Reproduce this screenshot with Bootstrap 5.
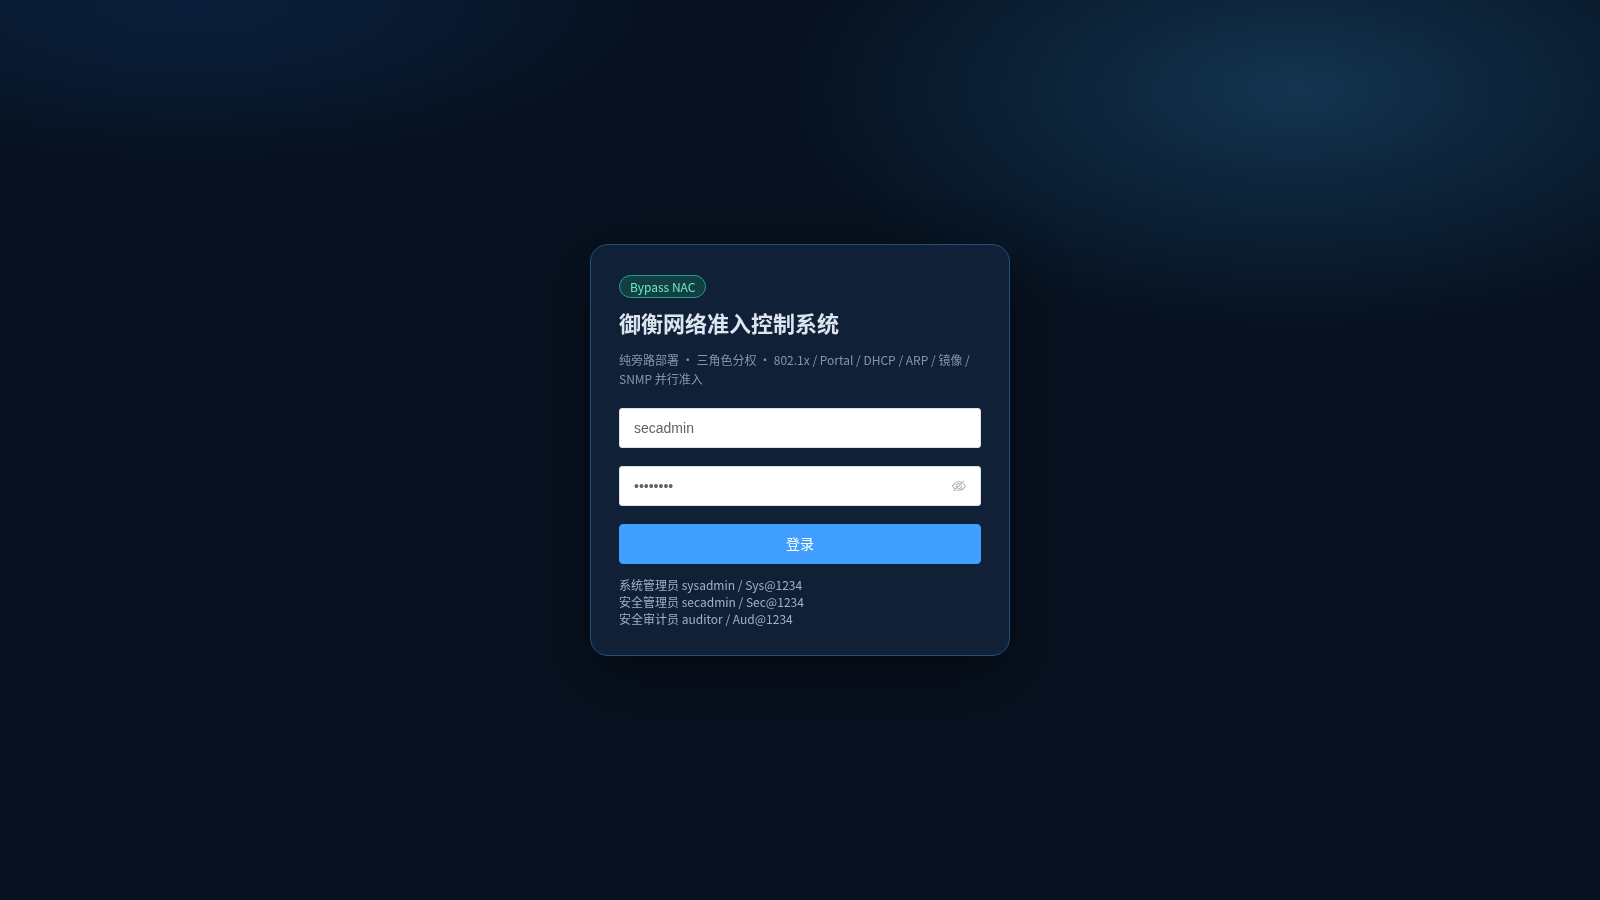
<!DOCTYPE html>
<html lang="zh-CN">
<head>
<meta charset="utf-8">
<title>御衡网络准入控制系统</title>
<link href="https://cdn.jsdelivr.net/npm/bootstrap@5.3.0/dist/css/bootstrap.min.css" rel="stylesheet">
<style>
html,body{height:100%}
body{font-family:"Noto Sans CJK SC","Noto Sans",sans-serif;color:#dbe7f3;
background:
 radial-gradient(ellipse 520px 245px at 81% 10%,rgba(29,82,122,.54) 0,rgba(22,68,104,.33) 50%,rgba(7,17,31,0) 100%),
 radial-gradient(ellipse 480px 170px at 12% 0,rgba(13,46,88,.48) 0,rgba(13,46,88,.34) 40%,rgba(7,17,31,0) 100%),
 #07111f;}
.login-panel{width:420px;background:rgba(16,34,56,.98);border:1px solid #24507a;border-radius:18px;padding:28px;box-shadow:0 20px 60px rgba(0,0,0,.45);backdrop-filter:blur(8px)}
.tag-pill{display:inline-block;height:23px;line-height:21px;padding:0 10px;font-size:12px;color:#72e8ca;background:#123f42;border:1px solid #2a9d8a;border-radius:12px}
.panel-title{font-size:22px;font-weight:700;line-height:30px;color:#dde6f0;margin:9px 0 0}
.panel-desc{font-size:12px;line-height:19px;color:#8196ae;margin:13px 0 20px}
.field-input{height:40px;font-family:"Liberation Sans",sans-serif;font-size:14px;color:#606266;padding:0 15px;border:0;border-radius:4px;box-shadow:inset 0 0 0 1px #dcdfe6}
.field-input:focus{color:#606266;box-shadow:inset 0 0 0 1px #dcdfe6}
.field-wrap{margin-bottom:18px}
.eye-icon{position:absolute;right:15px;top:13px;width:14px;height:14px;fill:#a8abb2}
.submit-btn{height:40px;font-size:14px;color:#fff;background:#409eff;border:1px solid #409eff;border-radius:4px;padding:0 0 2px}
.submit-btn:hover{color:#fff;background:#409eff;border-color:#409eff}
.account-hints{font-size:12px;line-height:17px;color:#a0b2c6;margin-top:12px}
</style>
</head>
<body>
<main class="d-flex align-items-center justify-content-center h-100">
  <div class="login-panel">
    <span class="tag-pill">Bypass NAC</span>
    <h1 class="panel-title">御衡网络准入控制系统</h1>
    <p class="panel-desc">纯旁路部署 ・ 三角色分权 ・ 802.1x / Portal / DHCP / ARP / 镜像 / SNMP 并行准入</p>
    <form>
      <div class="field-wrap"><input class="form-control field-input" type="text" value="secadmin" aria-label="用户名"></div>
      <div class="field-wrap position-relative">
        <input class="form-control field-input" type="password" value="Sec@1234" aria-label="密码">
        <svg class="eye-icon" viewBox="0 0 1024 1024" aria-hidden="true"><path d="M876.8 156.8c0-9.6-3.2-16-9.6-22.4-6.4-6.4-12.8-9.6-22.4-9.6-9.6 0-16 3.2-22.4 9.6L736 220.8c-64-32-137.6-51.2-224-60.8-160 16-288 73.6-377.6 176C44.8 438.4 0 496 0 512s48 73.6 134.4 176c22.4 25.6 44.8 48 73.6 67.2l-86.4 89.6c-6.4 6.4-9.6 12.8-9.6 22.4 0 9.6 3.2 16 9.6 22.4 6.4 6.4 12.8 9.6 22.4 9.6 9.6 0 16-3.2 22.4-9.6l704-710.4c3.2-6.4 6.4-12.8 6.4-22.4Zm-646.4 528c-76.8-70.4-128-128-153.6-172.8 28.8-48 80-105.6 153.6-172.8C304 272 400 230.4 512 224c64 3.2 124.8 19.2 176 44.8l-54.4 54.4C598.4 300.8 560 288 512 288c-64 0-115.2 22.4-160 64s-64 96-64 160c0 48 12.8 89.6 35.2 124.8L256 707.2c-9.6-6.4-19.2-16-25.6-22.4Zm140.8-96c-12.8-22.4-19.2-48-19.2-76.8 0-44.8 16-83.2 48-112 32-28.8 67.2-48 112-48 28.8 0 54.4 6.4 73.6 19.2L371.2 588.8ZM889.6 336c-12.8-16-28.8-28.8-41.6-41.6l-48 48c73.6 67.2 124.8 124.8 150.4 169.6-28.8 48-80 105.6-153.6 172.8-73.6 67.2-172.8 108.8-284.8 115.2-51.2-3.2-99.2-12.8-140.8-28.8l-48 48c57.6 22.4 118.4 38.4 188.8 44.8 160-16 288-73.6 377.6-176C979.2 585.6 1024 528 1024 512s-48-73.6-134.4-176Z"/><path d="M512 672c-12.8 0-25.6-3.2-38.4-6.4l-51.2 51.2c28.8 12.8 57.6 19.2 89.6 19.2 64 0 115.2-22.4 160-64 41.6-41.6 64-96 64-160 0-32-6.4-64-19.2-89.6l-51.2 51.2c3.2 12.8 6.4 25.6 6.4 38.4 0 44.8-16 83.2-48 112-32 28.8-67.2 48-112 48Z"/></svg>
      </div>
      <button class="btn w-100 submit-btn" type="button">登录</button>
    </form>
    <div class="account-hints">
      <div>系统管理员 sysadmin / Sys@1234</div>
      <div>安全管理员 secadmin / Sec@1234</div>
      <div>安全审计员 auditor / Aud@1234</div>
    </div>
  </div>
</main>
<script src="https://cdn.jsdelivr.net/npm/bootstrap@5.3.0/dist/js/bootstrap.bundle.min.js"></script>
</body>
</html>
